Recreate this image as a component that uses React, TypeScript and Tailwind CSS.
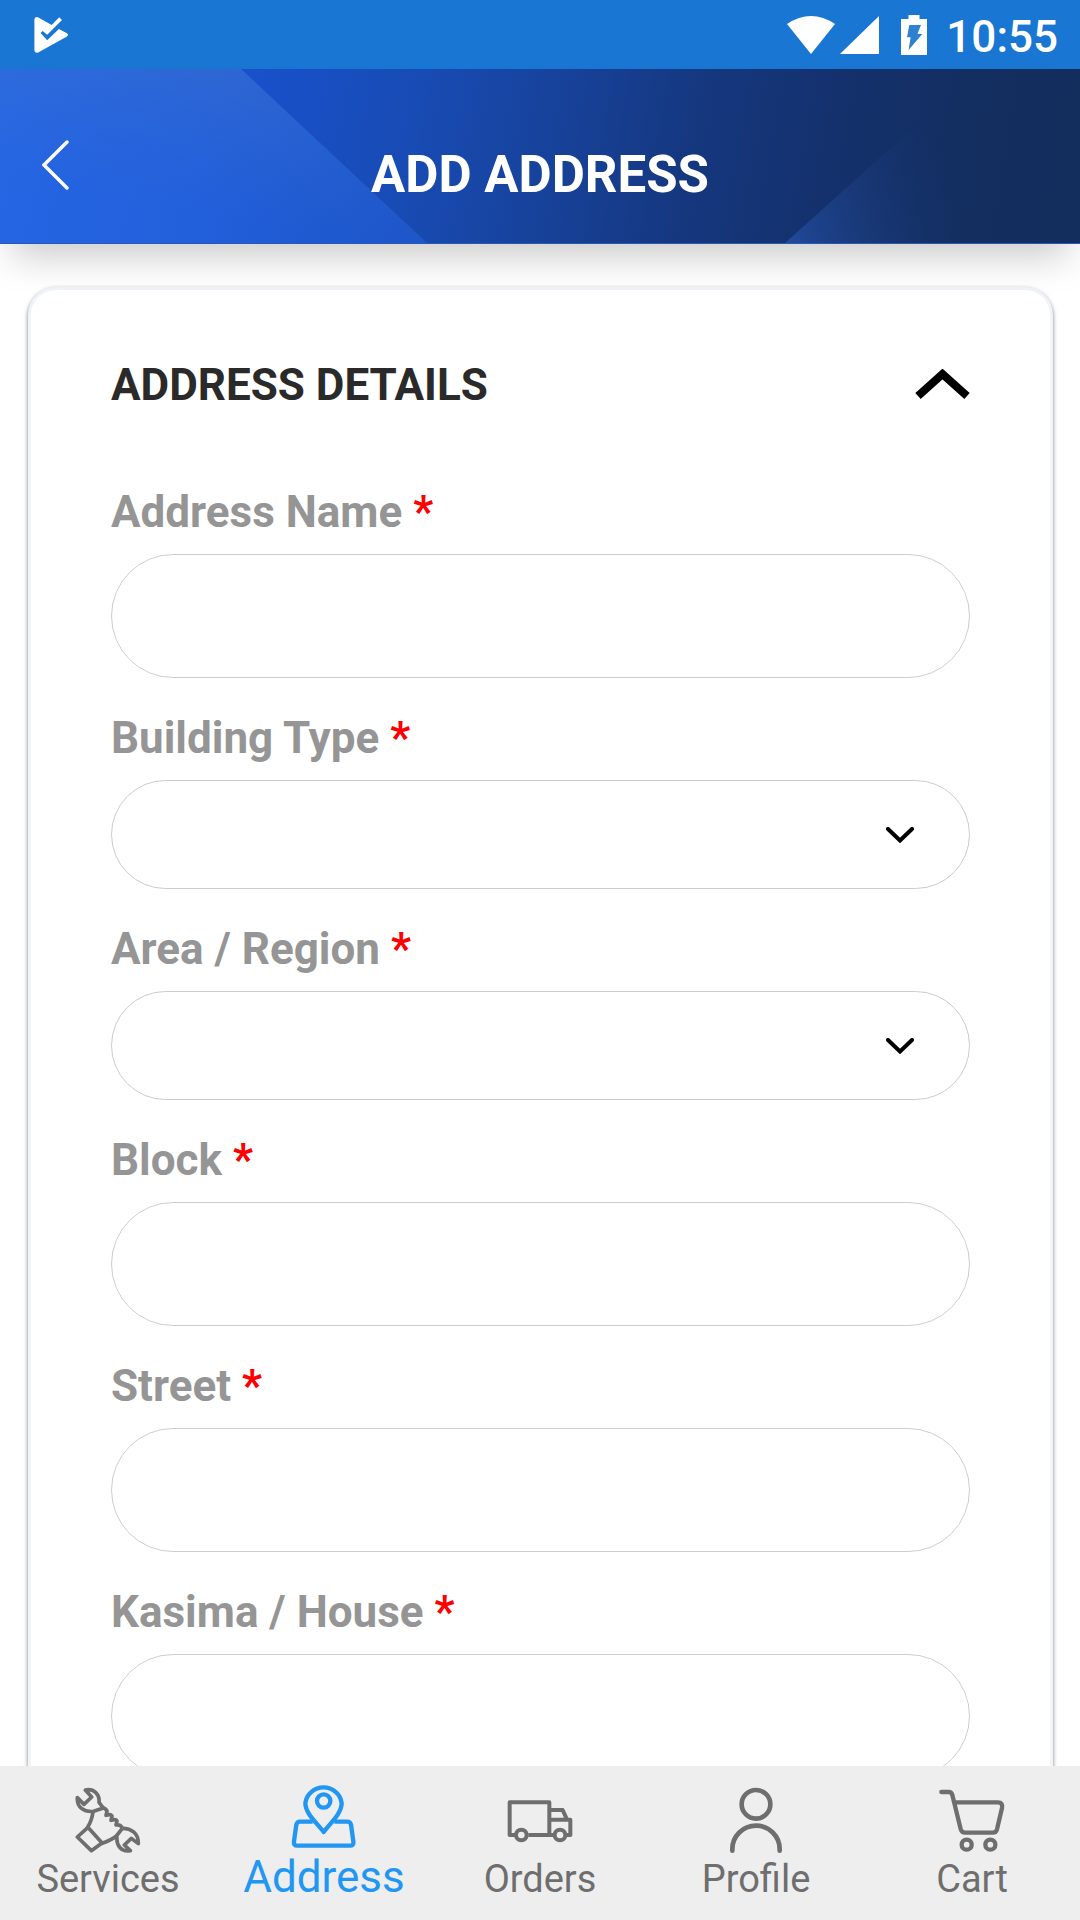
import React, { useState } from "react";

type Field = { id: string; label: string; kind: "text" | "select" };

const fields: Field[] = [
  { id: "address-name", label: "Address Name", kind: "text" },
  { id: "building-type", label: "Building Type", kind: "select" },
  { id: "area-region", label: "Area / Region", kind: "select" },
  { id: "block", label: "Block", kind: "text" },
  { id: "street", label: "Street", kind: "text" },
  { id: "kasima-house", label: "Kasima / House", kind: "text" },
];

function StatusBar() {
  return (
    <div className="flex h-[69px] shrink-0 items-center justify-between bg-[#1976d2] pr-[22px] pl-[34px] text-white">
      <svg className="h-9 w-[35px]" viewBox="0 0 35 36" fill="currentColor" aria-hidden="true">
        <path d="M.4 2.2Q1.200-.6 3.900.300L17.700 8 25.200.300 28 3 13.200 17.700 8.700 14 6.600 16 13.200 23.300 24.900 12 32.500 16Q35.500 17.700 32.500 19.700L4.200 35.500Q1 36.500.400 33.500Z" />
      </svg>
      <div className="flex items-center">
        <svg className="mr-[5px] h-[38px] w-12" viewBox="0 0 48 38" fill="currentColor" aria-hidden="true">
          <path d="M0 8Q24-8 48 8L24 38Z" />
        </svg>
        <svg className="mr-[22px] h-[38px] w-[39px]" viewBox="0 0 39 38" fill="currentColor" aria-hidden="true">
          <path d="M39 0V38H0Z" />
        </svg>
        <svg className="mr-[19px] h-10 w-[26px]" viewBox="0 0 26 40" aria-hidden="true">
          <path fill="currentColor" d="M7.500 0h11v4H26v36H0V4h7.500Z" />
          <path fill="#2f80cf" d="M8.300 10H20L16.500 18.700 21.300 19 7.600 35 9.600 22.300H6Z" />
        </svg>
        <time className="pt-1 text-[44px] leading-[52px] font-medium">10:55</time>
      </div>
    </div>
  );
}

function Header() {
  return (
    <header className="relative z-10 grid h-[175px] shrink-0 grid-cols-[1fr_auto_1fr] items-center border-b border-[#2a56b4] bg-linear-[100deg,#1851cd_22%,#184bb4_38%,#17429a_51%,#15377e_64%,#14316d_76%,#132e60_88%,#132d5c_100%] px-[42px] pt-[38px] shadow-[0_24px_36px_-12px_rgba(0,0,0,0.21)]">
      <svg className="absolute inset-0 h-full w-full" viewBox="0 0 1080 175" preserveAspectRatio="none" aria-hidden="true">
        <defs>
          <linearGradient id="leftFacet" gradientUnits="userSpaceOnUse" x1="0" y1="60" x2="400" y2="130">
            <stop offset="0" stopColor="#296be6" />
            <stop offset="0.5" stopColor="#2562db" />
            <stop offset="1" stopColor="#1e55c3" />
          </linearGradient>
          <linearGradient id="leftGlow" gradientUnits="userSpaceOnUse" x1="240" y1="0" x2="215" y2="150">
            <stop offset="0" stopColor="#3a6ecb" stopOpacity="0.45" />
            <stop offset="1" stopColor="#1c59dc" stopOpacity="0.3" />
          </linearGradient>
          <linearGradient id="rightFacet" gradientUnits="userSpaceOnUse" x1="790" y1="175" x2="960" y2="125">
            <stop offset="0" stopColor="#20499a" />
            <stop offset="0.45" stopColor="#1a3b7c" stopOpacity="0.7" />
            <stop offset="1" stopColor="#15326b" stopOpacity="0" />
          </linearGradient>
        </defs>
        <path d="M0 0H241L427 175H0Z" fill="url(#leftFacet)" />
        <path d="M0 0H241L427 175H0Z" fill="url(#leftGlow)" />
        <path d="M785 175L910 62L1080 175Z" fill="url(#rightFacet)" />
      </svg>
      <button type="button" aria-label="Back" className="relative justify-self-start pb-5 text-white">
        <svg className="h-[52px] w-[28px]" viewBox="0 0 28 52" fill="none" stroke="currentColor" strokeWidth="3.400" strokeLinecap="round" aria-hidden="true">
          <path d="M25 3 2 26 25 49" />
        </svg>
      </button>
      <h1 className="relative text-[51px] leading-[60px] font-bold text-white">ADD ADDRESS</h1>
    </header>
  );
}

function FormField({ field }: { field: Field }) {
  return (
    <div className="flex flex-col">
      <label htmlFor={field.id} className="mb-4 text-[44px] leading-[52px] font-bold text-[#959595]">
        {field.label} <span className="text-[#ff0000]">*</span>
      </label>
      {field.kind === "text" ? (
        <input
          id={field.id}
          type="text"
          required
          className="h-[124px] w-full rounded-full border border-[#c8d0d5] bg-white px-12 text-[44px] text-[#2b2b2b] outline-none"
        />
      ) : (
        <div className="relative">
          <select
            id={field.id}
            required
            defaultValue=""
            className="block h-[109px] w-full appearance-none rounded-full border border-[#cccccc] bg-white px-12 text-[44px] text-[#2b2b2b] outline-none"
          >
            <option value=""></option>
          </select>
          <svg className="pointer-events-none absolute top-[47px] right-14 h-4 w-7" viewBox="0 0 28 16" fill="none" stroke="#000" strokeWidth="4" strokeLinecap="round" aria-hidden="true">
            <path d="M2 2 14 13.500 26 2" />
          </svg>
        </div>
      )}
    </div>
  );
}

const navItems: { label: string; viewBox: string; drawing: React.ReactNode }[] = [
  {
    label: "Services",
    viewBox: "227 144 198 198",
    drawing: (
      <g strokeWidth="11" strokeLinejoin="round">
        <path d="M258 153C284 148 302 166 299 190L312 207 283 217C253 220 232 204 234 176L254 196 277 174Z" />
        <path d="M281 219Q277 246 265 264L309 313Q338 302 351 291L369 268" />
        <path d="M265 266 234 294 276 335 309 311" />
        <path d="M306 205Q320 208 323 216L320 229Q334 224 338 231L335 244Q350 239 353 246L350 258Q363 255 369 267" />
        <path d="M369 268C396 268 418 283 417 314L396 298 375 318 393 335C367 340 350 321 353 292" />
      </g>
    ),
  },
  {
    label: "Address",
    viewBox: "877 130 198 198",
    drawing: (
      <g strokeWidth="13" strokeLinejoin="round">
        <path d="M975 277C955 250 920 222 920 190A55 54 0 0 1 1029 190C1029 222 995 250 975 277Z" />
        <circle cx="975" cy="184" r="20" />
        <path d="M942 246H904Q895 246 893 255L886 305Q884 318 896 318H1054Q1066 318 1064 305L1057 255Q1055 246 1046 246H1007" />
      </g>
    ),
  },
  {
    label: "Orders",
    viewBox: "440 141 198 198",
    drawing: (
      <g strokeWidth="12" strokeLinejoin="round">
        <path d="M465 285H448V187H567V285M504 285H578M567 210H607L620 239M567 239H630V285H620" />
        <circle cx="483" cy="285" r="16" />
        <circle cx="599" cy="285" r="16" />
      </g>
    ),
  },
  {
    label: "Profile",
    viewBox: "9 143 198 198",
    drawing: (
      <g strokeWidth="14" strokeLinecap="round">
        <circle cx="108" cy="195" r="43" />
        <path d="M37 334V329A71 70 0 0 1 179 329V334" />
      </g>
    ),
  },
  {
    label: "Cart",
    viewBox: "658 141 198 198",
    drawing: (
      <g strokeWidth="13" strokeLinecap="round" strokeLinejoin="round">
        <path d="M665 156H687Q696 156 698 165L723 267Q726 278 736 278H820Q829 278 832 268L847 204Q850 187 835 187H706" />
        <circle cx="741" cy="314" r="15" />
        <circle cx="812" cy="314" r="15" />
      </g>
    ),
  },
];

function BottomNav() {
  const [active, setActive] = useState("Address");
  return (
    <nav className="grid h-[154px] shrink-0 grid-cols-5 bg-[#eeeeee]">
      {navItems.map(({ label, viewBox, drawing }) => {
        const isActive = label === active;
        return (
          <button
            key={label}
            type="button"
            aria-current={isActive ? "page" : undefined}
            onClick={() => setActive(label)}
            className={`flex flex-col items-center justify-end gap-1 pb-[19px] ${isActive ? "text-[#2196f3]" : "text-[#6e6e6e]"}`}
          >
            <svg className="size-[66px]" viewBox={viewBox} fill="none" stroke="currentColor" aria-hidden="true">
              {drawing}
            </svg>
            <span className={isActive ? "text-[44px] leading-[48px]" : "text-[38px] leading-[44px]"}>{label}</span>
          </button>
        );
      })}
    </nav>
  );
}

export default function App() {
  const [open, setOpen] = useState(true);
  return (
    <div className="flex h-screen flex-col overflow-hidden bg-white font-[Roboto,sans-serif]">
      <StatusBar />
      <Header />
      <main className="min-h-0 flex-1 overflow-y-auto pt-[43px] pr-[27px] pb-10 pl-7 [scrollbar-width:none]">
        <section className="rounded-[28px] border-3 border-[#f0f3f7] bg-white px-20 pt-[69px] pb-16 shadow-[0_2px_4px_rgba(0,0,0,0.5)]">
          <div className="flex items-center justify-between">
            <h2 className="text-[44px] leading-[52px] font-bold text-[#2a2a2a]">ADDRESS DETAILS</h2>
            <button type="button" aria-label="Toggle address details" aria-expanded={open} onClick={() => setOpen(!open)}>
              <svg className={open ? "h-8 w-[55px]" : "h-8 w-[55px] rotate-180"} viewBox="0 0 55 32" fill="none" stroke="#000" strokeWidth="8" aria-hidden="true">
                <path d="M3 27 27.500 5 52 27" />
              </svg>
            </button>
          </div>
          {open && (
            <form className="mt-[75px] flex flex-col gap-[34px]">
              {fields.map((field) => (
                <FormField key={field.id} field={field} />
              ))}
            </form>
          )}
        </section>
      </main>
      <BottomNav />
    </div>
  );
}
